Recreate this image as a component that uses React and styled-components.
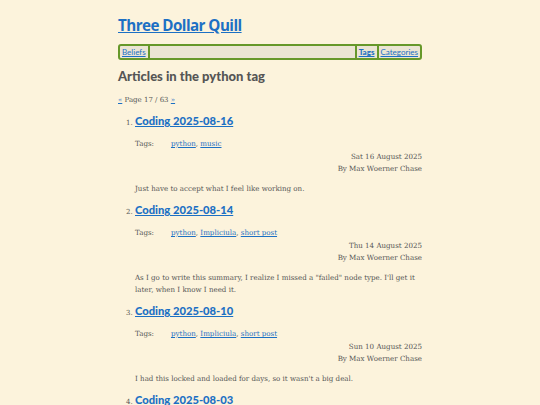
import React from "react";
import styled, { createGlobalStyle } from "styled-components";

const GlobalStyle = createGlobalStyle`
  html, body {
    margin: 0;
    padding: 0;
    background: #fcf3dc;
  }
  body {
    font-family: "DejaVu Serif", serif;
    color: #555;
  }
  a {
    color: #1c70c4;
  }
`;

const Page = styled.div`
  width: 304px;
  margin: 0 auto;
  padding-top: 14px;
`;

const Title = styled.h1`
  margin: 0 0 8px;
  font-family: "Open Sans", sans-serif;
  font-size: 15.2px;
  letter-spacing: -0.55px;
  line-height: 22px;
  font-weight: 700;
  a {
    color: #1c70c4;
  }
`;

const Nav = styled.nav`
  display: flex;
  align-items: stretch;
  height: 12px;
  border: 2px solid #66982a;
  border-radius: 3px;
  background: #ebe5d3;
  font-family: Lato, sans-serif;
  font-size: 8px;
  line-height: 12px;
`;

const NavLink = styled.a`
  padding: 0 2px;
  font-weight: ${(p) => (p.$current ? 900 : 400)};
  border-left: ${(p) => (p.$left ? "2px solid #66982a" : "none")};
  border-right: ${(p) => (p.$right ? "2px solid #66982a" : "none")};
`;

const Spacer = styled.div`
  flex: 1;
`;

const Heading = styled.h2`
  margin: 8px 0 10px;
  font-family: Lato, sans-serif;
  font-size: 13px;
  line-height: 16px;
  font-weight: 900;
  color: #555;
`;

const Pager = styled.p`
  margin: 0 0 7px;
  font-size: 7px;
  line-height: 12px;
`;

const List = styled.ol`
  margin: 0;
  padding-left: 17px;
  font-size: 7px;
`;

const Item = styled.li`
  margin-bottom: 7px;
`;

const ItemTitle = styled.h3`
  margin: 0 0 9px;
  font-family: Lato, sans-serif;
  font-size: 11.2px;
  line-height: 16px;
  font-weight: 900;
`;

const TagRow = styled.div`
  display: flex;
  font-size: 7.1px;
  line-height: 12px;
  margin-bottom: 1px;
`;

const TagLabel = styled.span`
  width: 36px;
`;

const Meta = styled.div`
  text-align: right;
  font-size: 7.1px;
  line-height: 12px;
`;

const Summary = styled.p`
  margin: 8px 0 0;
  font-size: 7.1px;
  line-height: 12px;
`;

const articles = [
  {
    title: "Coding 2025-08-16",
    tags: ["python", "music"],
    date: "Sat 16 August 2025",
    summary: "Just have to accept what I feel like working on.",
  },
  {
    title: "Coding 2025-08-14",
    tags: ["python", "Impliciula", "short post"],
    date: "Thu 14 August 2025",
    summary:
      "As I go to write this summary, I realize I missed a \"failed\" node type. I'll get it later, when I know I need it.",
  },
  {
    title: "Coding 2025-08-10",
    tags: ["python", "Impliciula", "short post"],
    date: "Sun 10 August 2025",
    summary: "I had this locked and loaded for days, so it wasn't a big deal.",
  },
  {
    title: "Coding 2025-08-03",
    tags: ["python", "Impliciula", "short post"],
    date: "Sun 3 August 2025",
    summary: "More of the same.",
  },
];

const App = () => {
  return (
    <>
      <GlobalStyle />
      <Page>
        <Title>
          <a href="#">Three Dollar Quill</a>
        </Title>
        <Nav>
          <NavLink href="#" $right>
            Beliefs
          </NavLink>
          <Spacer />
          <NavLink href="#" $left $current>
            Tags
          </NavLink>
          <NavLink href="#" $left>
            Categories
          </NavLink>
        </Nav>
        <Heading>Articles in the python tag</Heading>
        <Pager>
          <a href="#">«</a> Page 17 / 63 <a href="#">»</a>
        </Pager>
        <List start={1}>
          {articles.map((a) => (
            <Item key={a.title}>
              <ItemTitle>
                <a href="#">{a.title}</a>
              </ItemTitle>
              <TagRow>
                <TagLabel>Tags:</TagLabel>
                <span>
                  {a.tags.map((t, i) => (
                    <React.Fragment key={t}>
                      <a href="#">{t}</a>
                      {i < a.tags.length - 1 ? ", " : ""}
                    </React.Fragment>
                  ))}
                </span>
              </TagRow>
              <Meta>
                <div>{a.date}</div>
                <div>By Max Woerner Chase</div>
              </Meta>
              <Summary>{a.summary}</Summary>
            </Item>
          ))}
        </List>
      </Page>
    </>
  );
};

export default App;
